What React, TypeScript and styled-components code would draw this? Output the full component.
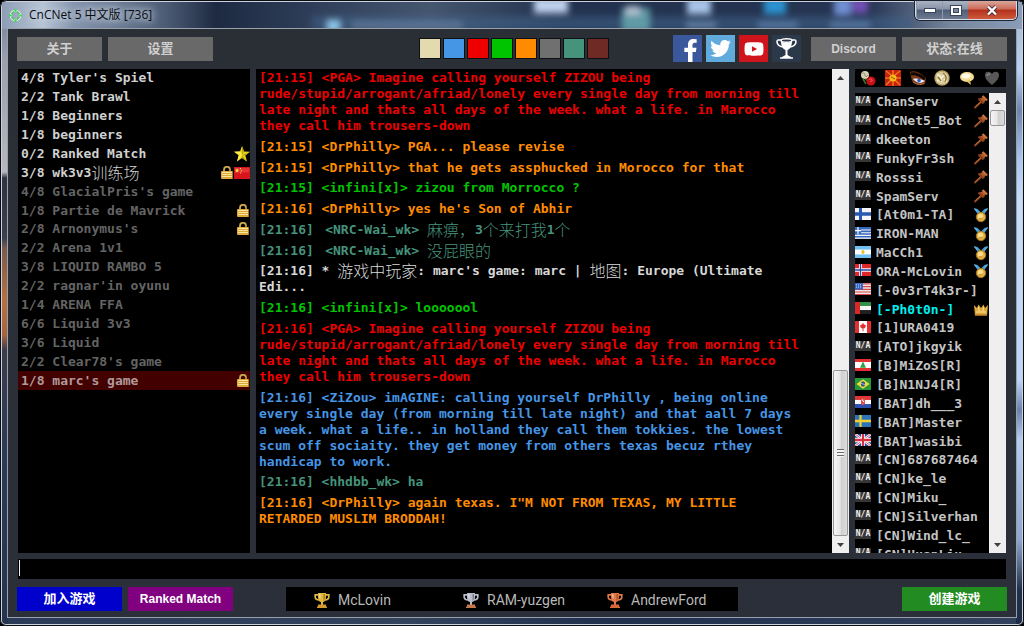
import React from 'react';
import styled, { createGlobalStyle } from 'styled-components';
import { FaFacebookF, FaTwitter, FaYoutube } from 'react-icons/fa';

const mono = '"DejaVu Sans Mono", "Noto Sans CJK SC", monospace';
const sans = '"Liberation Sans", "Noto Sans CJK SC", sans-serif';

const GlobalStyle = createGlobalStyle`
  *, *::before, *::after { box-sizing: border-box; }
  body { margin: 0; background: #000; font-family: ${sans}; }
  button, input { font-family: inherit; border: 0; padding: 0; margin: 0; border-radius: 0; }
  ul { list-style: none; margin: 0; padding: 0; }
  svg { display: block; }
`;

/* ---------- window frame ---------- */

const Window = styled.div`
  position: relative;
  display: flex;
  flex-direction: column;
  height: 100vh;
  min-height: 480px;
  padding: 0 7px 8px;
  border-radius: 7px 7px 6px 6px;
  overflow: hidden;
  box-shadow: inset 0 0 0 1px #0a0c12, inset 0 0 0 2px #c9d2dd;
  background:
    linear-gradient(#6d7a90 0, #9aa0ae 60px, #b7b7bd 172px, #2e3344 178px, #39404f 238px, #7a5a4e 248px, #b8703c 300px, #a8643c 335px, #3c3d4c 350px, #2c3a55 460px, #26344f 100%) left / 8px 100% no-repeat,
    linear-gradient(#9fb2cc 0, #b9d2f2 70px, #6f86ab 110px, #a9c6ef 160px, #c6dcfa 200px, #bcd6f8 380px, #6a83ab 410px, #b6cdee 440px, #8ea6cc 540px, #22304c 590px, #1e2c46 100%) right / 8px 100% no-repeat,
    linear-gradient(90deg, #2b3a57, #34435c 40%, #1f2f4c 60%, #33415c);
`;

const Backdrop = styled.svg`
  position: absolute;
  inset: 2px 2px auto 2px;
  width: calc(100% - 4px);
  height: 27px;
`;

const TitleBar = styled.header`
  position: relative;
  flex: none;
  display: flex;
  align-items: flex-start;
  justify-content: space-between;
  height: 28px;
`;

const Title = styled.h1`
  display: flex;
  align-items: center;
  gap: 7px;
  margin: 5px 0 0 2px;
  font: 400 12px/20px "Open Sans", "Noto Sans CJK SC", sans-serif;
  color: #0a0c12;
  text-shadow: 0 0 6px #c9d3e0, 0 0 8px #c9d3e0, 0 0 12px #b4c0d0;
`;

const Controls = styled.div`
  display: flex;
  margin-top: 1px;
  height: 19px;
  border: 1px solid #d5dbe4;
  border-top: 0;
  border-radius: 0 0 5px 5px;
  box-shadow: 0 0 0 1px #1c2536;
  overflow: hidden;
`;

const ControlButton = styled.button<{ $close?: boolean }>`
  display: grid;
  place-items: center;
  width: ${p => (p.$close ? 48 : 26)}px;
  border-left: ${p => (p.$close ? 0 : 1)}px solid #8f99ab;
  background: ${p =>
    p.$close
      ? 'linear-gradient(#d9a79c 0, #cc6a58 45%, #b3301c 50%, #cf5a3a 100%)'
      : 'linear-gradient(#a9b3c2 0, #8792a6 45%, #4f5d76 50%, #6c7990 100%)'};
`;

const Client = styled.div`
  position: relative;
  flex: 1;
  min-height: 0;
  display: flex;
  flex-direction: column;
  padding: 6px 9px;
  border: 1px solid #97a1ad;
  background: linear-gradient(#2a2e35, #2b2f39);
`;

/* ---------- toolbar ---------- */

const Bar = styled.div`
  flex: none;
  display: grid;
  grid-template-columns: 1fr auto 1fr;
  align-items: center;
`;

const Toolbar = styled(Bar)`
  height: 27px;
`;

const Group = styled.div<{ $end?: boolean }>`
  display: flex;
  align-items: center;
  gap: 6px;
  justify-content: ${p => (p.$end ? 'flex-end' : 'flex-start')};
`;

const Button = styled.button<{ $narrow?: boolean; $color?: string; $latin?: boolean }>`
  width: ${p => (p.$narrow ? 85 : 105)}px;
  height: 24px;
  background: ${p => p.$color || '#696969'};
  color: ${p => (p.$color ? '#fff' : '#d0d0d0')};
  font-size: ${p => (p.$latin ? 12 : 13)}px;
  font-weight: 700;
  line-height: 24px;
  white-space: nowrap;
`;

const Swatches = styled.div`
  display: flex;
  gap: 2px;
  margin-left: 3px;
`;

const Swatch = styled.button<{ $color: string }>`
  width: 22px;
  height: 21px;
  border: 1px solid #0d0f13;
  background: ${p => p.$color};
`;

const Socials = styled.nav`
  display: flex;
  gap: 4px;
  margin-right: 4px;
`;

const Social = styled.a<{ $color: string; $low?: boolean }>`
  display: flex;
  justify-content: center;
  align-items: ${p => (p.$low ? 'flex-end' : 'center')};
  width: 29px;
  height: 27px;
  padding-left: ${p => (p.$low ? 5 : 0)}px;
  overflow: hidden;
  color: #fff;
  background: ${p => p.$color};
`;

/* ---------- panels ---------- */

const Main = styled.main`
  flex: 1;
  min-height: 0;
  display: grid;
  grid-template-columns: 232px minmax(0, 1fr) 151px;
  grid-template-rows: minmax(0, 1fr);
  gap: 6px;
  margin: 7px 1px 6px;
  font: 700 13px/16px ${mono};
  color: #c8c8c8;
`;

const Panel = styled.section`
  display: flex;
  min-height: 0;
  overflow: hidden;
  background: #000;
`;

const Wide = styled.span`
  display: inline-block;
  height: 16px;
  vertical-align: top;
  font: 300 16px/14px "Noto Sans CJK SC", sans-serif;
`;

const Games = styled.ul`
  flex: 1;
  height: 321px;
  display: grid;
  grid-auto-rows: 1fr;
`;

const Game = styled.li<{ $state?: string }>`
  display: flex;
  align-items: center;
  justify-content: space-between;
  padding-left: 3px;
  white-space: pre;
  color: ${p => (p.$state === 'dim' ? '#646464' : p.$state === 'picked' ? '#b09a9a' : '#d0d0d0')};
  background: ${p => (p.$state === 'picked' ? '#420000' : 'transparent')};
`;

const Marks = styled.span`
  display: flex;
  align-items: center;
`;

const Messages = styled.div`
  flex: 1;
  min-width: 0;
  display: flex;
  flex-direction: column;
  justify-content: space-between;
  padding: 1px 3px 26px;
`;

const Message = styled.p<{ $color: string }>`
  margin: 0;
  white-space: pre;
  color: ${p => p.$color};
`;

const Side = styled.aside`
  display: flex;
  flex-direction: column;
  gap: 6px;
  min-height: 0;
`;

const Tools = styled.div`
  flex: none;
  display: flex;
  justify-content: space-between;
  align-items: center;
  height: 18px;
  padding: 0 6px 0 5px;
  background: #000;
`;

const ToolButton = styled.button`
  width: 16px;
  height: 16px;
  background: none;
`;

const UsersPanel = styled(Panel)`
  flex: 1;
`;

const Users = styled.ul`
  flex: 1;
  min-width: 0;
  height: calc(100% + 11px);
  display: grid;
  grid-auto-rows: 1fr;
`;

const User = styled.li<{ $me?: boolean }>`
  display: flex;
  align-items: center;
  white-space: pre;
  min-width: 0;
  padding-right: 1px;
  color: ${p => (p.$me ? '#00f0f0' : '#c4c4c4')};
`;

const Name = styled.span`
  flex: 1;
  margin-left: 5px;
  width: 0;
`;

const FlagBox = styled.span`
  flex: none;
  margin-bottom: 3px;
`;

const NoFlag = styled.span`
  display: block;
  width: 16px;
  height: 10px;
  background: #363636;
  color: #f0f0f0;
  font: 700 8px/10px ${mono};
  text-align: center;
`;

/* ---------- scrollbar ---------- */

const Track = styled.div`
  flex: none;
  display: flex;
  flex-direction: column;
  width: 17px;
  background: #efefef;
`;

const Arrow = styled.button`
  flex: none;
  display: grid;
  place-items: center;
  height: 17px;
  background: none;
`;

const Slot = styled.div<{ $end?: boolean }>`
  flex: 1;
  display: flex;
  flex-direction: column;
  justify-content: ${p => (p.$end ? 'flex-end' : 'flex-start')};
`;

const Thumb = styled.div<{ $size: string }>`
  display: grid;
  place-items: center;
  height: ${p => p.$size};
  margin: 0 1px;
  border: 1px solid #979797;
  border-radius: 2px;
  background: linear-gradient(90deg, #f5f5f5, #e6e6e6 48%, #cfcfcf 55%, #dcdcdc);
`;

const Grip = styled.span`
  width: 7px;
  height: 8px;
  background: repeating-linear-gradient(#6a6a6a 0 1px, #f4f4f4 1px 3px);
`;

/* ---------- entry line and bottom bar ---------- */

const Entry = styled.label`
  flex: none;
  display: flex;
  height: 20px;
  margin: 0 1px 8px;
  padding: 1px;
  background: #000;
`;

const Caret = styled.span`
  width: 1px;
  height: 16px;
  background: #f0f0f0;
`;

const EntryInput = styled.input`
  flex: 1;
  background: none;
  outline: none;
  color: #d0d0d0;
  font: 700 13px/16px ${mono};
  caret-color: transparent;
`;

const Ladder = styled.ol`
  display: grid;
  grid-template-columns: 149px 144px 1fr;
  align-items: center;
  width: 452px;
  height: 24px;
  margin: 0;
  padding: 2px 0 0 28px;
  list-style: none;
  background: #000;
`;

const Winner = styled.li`
  display: flex;
  align-items: center;
  gap: 8px;
  font: 400 14px/20px Roboto, sans-serif;
  color: #b8b8b8;
`;

/* ---------- drawings ---------- */

const Aero = () => (
  <Backdrop viewBox="0 0 1020 27" preserveAspectRatio="none" aria-hidden="true">
    <defs>
      <linearGradient id="glass" x1="0" x2="1" y1="0" y2="0">
        <stop offset="0" stopColor="#8c9db5" />
        <stop offset=".04" stopColor="#b9c5d6" />
        <stop offset=".07" stopColor="#8494ac" />
        <stop offset=".16" stopColor="#4d5c75" />
        <stop offset=".21" stopColor="#1d2a42" />
        <stop offset=".33" stopColor="#34445f" />
        <stop offset=".42" stopColor="#45566f" />
        <stop offset=".55" stopColor="#22324e" />
        <stop offset=".85" stopColor="#263552" />
        <stop offset=".93" stopColor="#76869c" />
        <stop offset="1" stopColor="#8a9cb8" />
      </linearGradient>
      <filter id="soft" x="-30%" y="-30%" width="160%" height="160%">
        <feGaussianBlur stdDeviation="3" />
      </filter>
    </defs>
    <rect width="1020" height="27" fill="url(#glass)" />
    <g filter="url(#soft)">
      <rect x="310" y="14" width="600" height="14" fill="#3f6289" opacity=".55" />
      <rect x="325" y="18" width="13" height="12" fill="#8cc4e8" />
      <rect x="350" y="19" width="110" height="8" fill="#6a83a5" opacity=".6" />
      <rect x="532" y="-4" width="34" height="15" fill="#bdd0ec" />
      <rect x="620" y="6" width="28" height="24" fill="#5f9aa6" />
      <rect x="624" y="4" width="14" height="9" fill="#b0bfce" />
      <rect x="685" y="-4" width="24" height="16" fill="#a8c4e8" />
      <rect x="762" y="-4" width="22" height="16" fill="#2a92d0" />
      <rect x="832" y="-4" width="17" height="17" fill="#6f8fd2" />
      <rect x="850" y="-4" width="16" height="15" fill="#7350b4" />
      <rect x="684" y="20" width="30" height="6" fill="#6583a8" />
      <rect x="756" y="20" width="40" height="6" fill="#587aa4" />
      <rect x="828" y="20" width="40" height="6" fill="#587aa4" />
    </g>
  </Backdrop>
);

const Crosshair = () => (
  <svg width="13" height="13" viewBox="0 0 14 14" aria-hidden="true">
    <circle cx="7" cy="7" r="5" fill="none" stroke="#f4f8f4" strokeWidth="2.400" />
    <path d="M2.500 5.500l3-3M8.500 2.500l3 3M11.500 8.500l-3 3M5.500 11.500l-3-3" stroke="#58b868" strokeWidth="1.600" />
    <path d="M7 0v3M7 11v3M0 7h3M11 7h3" stroke="#2fe04a" strokeWidth="2.400" />
  </svg>
);

const Lock = () => (
  <svg width="14" height="14" viewBox="0 0 14 14" aria-label="locked">
    <path d="M4 6V3.700a3 3 0 0 1 6 0V6" fill="none" stroke="#a8842c" strokeWidth="2" />
    <path d="M4 5V3.700a3 3 0 0 1 6 0" fill="none" stroke="#ecd080" strokeWidth=".7" />
    <rect x="1" y="5" width="12" height="8" rx="1" fill="#dca838" />
    <path d="M2 6.500h10M2 8.500h10M2 10.500h10" stroke="#f8e49c" strokeWidth="1" />
    <path d="M12.500 5.500v7" stroke="#a87820" />
  </svg>
);

const Star = () => (
  <svg width="16" height="16" viewBox="0 0 16 16" aria-label="ranked">
    <path d="M8 0l2 5.600 6 .2-4.700 3.700L13 15.500 8 12l-5 3.500 1.700-6L0 5.800l6-.2z" fill="#e8d81c" />
    <path d="M8 9l5 6.500L8 12zM8 9l8-3.200-4.700 3.700zM8 0l2 5.600L8 9z" fill="#b8a010" />
    <path d="M8 9L0 5.800l6-.2zM8 9l-5 6.500 1.700-6z" fill="#fff05c" />
  </svg>
);

const ChinaFlag = () => (
  <svg width="16" height="12" viewBox="0 0 16 11" preserveAspectRatio="none" aria-label="CN">
    <rect width="16" height="11" fill="#d8141c" />
    <rect x="1" y="1" width="14" height="4" fill="#ee4a4a" opacity=".6" />
    <path d="M3 1l.7 1.500H5.200L4 3.600l.4 1.600L3 4.200l-1.400 1L2 3.600.8 2.500h1.500z" fill="#ffe040" />
    <path d="M6 1h1v1H6zM7 3h1v1H7zM6 5h1v1H6z" fill="#ffe040" />
  </svg>
);

const Cup = ({ fill, dark, base }: { fill: string; dark: string; base: string }) => (
  <svg width="16" height="15" viewBox="0 0 16 15" aria-hidden="true">
    <path d="M4 1.800H1.200V4c0 1.800 1.300 2.800 4 3M12 1.800h2.800V4c0 1.800-1.300 2.800-4 3" fill="none" stroke={fill} strokeWidth="1.700" />
    <path d="M4 0h8v4c0 3-1.500 5-3 5v3H7V9C5.500 9 4 7 4 4z" fill={fill} />
    <path d="M9.500 1h1.500v3c0 2-.6 3.500-1.500 4z" fill={dark} />
    <path d="M5 1h1.500v5C5.500 5.500 5 4 5 3z" fill="#fff" opacity=".45" />
    <path d="M4 11.500h8v1.500l1 1v1H3v-1l1-1z" fill={base} />
  </svg>
);

const WhiteCup = () => (
  <svg width="21" height="21" viewBox="0 0 21 21" fill="none" stroke="#fff" aria-hidden="true">
    <path d="M6 2H2c-1 0-1 1-1 2 .3 3 2.500 4.500 6 5M15 2h4c1 0 1 1 1 2-.3 3-2.500 4.500-6 5" strokeWidth="1.600" />
    <ellipse cx="10.500" cy="2.500" rx="5.500" ry="1.700" strokeWidth="1.500" />
    <path d="M5 3c0 5 2 8 4.500 9v5L6 19v1h9v-1l-3.500-2v-5C14 11 16 8 16 3c-2 2-9 2-11 0z" fill="#fff" stroke="none" />
    <path d="M4 20h13" strokeWidth="1.500" />
  </svg>
);

const Hammer = () => (
  <svg width="14" height="15" viewBox="0 0 14 15" aria-label="admin">
    <path d="M1 12.500L7.500 6.500" stroke="#8f441c" strokeWidth="2" strokeLinecap="round" />
    <path d="M5.500 3.500l4-1.500 2 2.500-1.500 4z" fill="#b05828" />
    <path d="M4.500 3.500l5 5" stroke="#8a4018" strokeWidth="2.200" />
    <path d="M8.500 1l4.500 4.500" stroke="#c87038" strokeWidth="2.400" />
    <path d="M1.500 11.500L6.500 7" stroke="#d08450" strokeWidth=".7" />
  </svg>
);

const Medal = () => (
  <svg width="14" height="15" viewBox="0 0 14 15" aria-label="medal">
    <path d="M0 0l3.500 1L7 4.500 3.500 6zM14 0l-3.500 1L7 4.500 10.500 6z" fill="#3f9ed8" />
    <path d="M0 .5l3 3M14 .5l-3 3" stroke="#8ccaf0" />
    <circle cx="7" cy="9" r="4.700" fill="#e0b040" stroke="#a87420" />
    <circle cx="6.500" cy="8.500" r="2.800" fill="#f8dc8c" />
    <path d="M5 10c1 1.500 3 1 3.500-.5" stroke="#b88428" fill="none" />
  </svg>
);

const Crown = () => (
  <svg width="14" height="12" viewBox="0 0 14 12" aria-label="crown">
    <path d="M0 1l3 3 1.500-3.500L7 4l2.500-3.500L11 4l3-3-1 10.500H1z" fill="#e0a83c" />
    <path d="M2 8h10M4.500 3l.5 4M9.500 3L9 7" stroke="#fce49c" />
    <path d="M1 11h12" stroke="#b88024" />
  </svg>
);

const flagArt: Record<string, React.ReactNode> = {
  fi: <><rect width="16" height="10" fill="#f4f4f8" /><path d="M0 5h16M5.500 0v10" stroke="#2858b0" strokeWidth="3" /></>,
  gr: <><rect width="16" height="10" fill="#3468c0" /><path d="M6 2.500h10M6 4.800h10M0 7h16M0 9.300h16" stroke="#f4f4f8" strokeWidth="1" /><path d="M0 3h6M3 0v6" stroke="#fff" strokeWidth="1.200" /></>,
  ar: <><rect width="16" height="10" fill="#70c0f0" /><rect y="3" width="16" height="4" fill="#fff" /><circle cx="8" cy="5" r="1.600" fill="#f0c020" /></>,
  no: <><rect width="16" height="10" fill="#e02828" /><path d="M0 5h16M5.500 0v10" stroke="#fff" strokeWidth="3" /><path d="M0 5h16M5.500 0v10" stroke="#2848a0" strokeWidth="1.400" /></>,
  us: <><rect width="16" height="10" fill="#f0e4e4" /><path d="M0 .7h16M0 3h16M0 5.300h16M0 7.500h16M0 9.600h16" stroke="#d84848" /><rect width="8" height="5.500" fill="#3868c0" /><path d="M1 1.500h6M1 3.500h6" stroke="#a8c0f0" strokeDasharray="1 1" /></>,
  ae: <><rect width="16" height="10" fill="#f4f4f4" /><rect width="16" height="3.300" fill="#309048" /><rect y="6.700" width="16" height="3.300" fill="#202020" /><rect width="5" height="10" fill="#d82828" /></>,
  ca: <><rect width="16" height="10" fill="#fff" /><path d="M0 0h4v10H0zM12 0h4v10h-4z" fill="#e03030" /><path d="M8 1.500l1 1.500 2 .5-1 2.500H8.500V8.500h-1V6H6L5 3.500 7 3z" fill="#e03030" /></>,
  lb: <><rect width="16" height="10" fill="#fff" /><path d="M0 0h16v2.500H0zM0 7.500h16V10H0z" fill="#e03030" /><path d="M8 2l3 5.300H5z" fill="#30a048" /></>,
  br: <><rect width="16" height="10" fill="#28983c" /><path d="M8 1l6.500 4L8 9 1.500 5z" fill="#f4dc30" /><circle cx="8" cy="5" r="2.200" fill="#2850a0" /><path d="M6 4.500l4 1" stroke="#dce8f8" strokeWidth=".6" /></>,
  hr: <><rect width="16" height="10" fill="#fff" /><rect width="16" height="3.300" fill="#e03838" /><rect y="6.700" width="16" height="3.300" fill="#2c50b0" /><path d="M6 2h4v4L8 8 6 6z" fill="#e85050" /><path d="M7 3h1v1H7zM8 4h1v1H8z" fill="#fff" /></>,
  se: <><rect width="16" height="10" fill="#2c74b8" /><path d="M0 5h16M5.500 0v10" stroke="#f4d030" strokeWidth="2.200" /></>,
  gb: <><rect width="16" height="10" fill="#2c489c" /><path d="M0 0l16 10M16 0L0 10" stroke="#fff" strokeWidth="2.200" /><path d="M0 0l16 10M16 0L0 10" stroke="#d83040" strokeWidth=".8" /><path d="M8 0v10M0 5h16" stroke="#fff" strokeWidth="3.600" /><path d="M8 0v10M0 5h16" stroke="#d83040" strokeWidth="2" /></>,
};

const Flag = ({ code }: { code?: string }) => (
  <FlagBox>
    {code ? (
      <svg width="16" height="12" viewBox="0 0 16 10" preserveAspectRatio="none" aria-label={code}>{flagArt[code]}</svg>
    ) : (
      <NoFlag>N/A</NoFlag>
    )}
  </FlagBox>
);

const badges: Record<string, React.ReactNode> = { hammer: <Hammer />, medal: <Medal />, crown: <Crown /> };

const toolArt: [string, React.ReactNode][] = [
  ['rose', <>
    <circle cx="5" cy="5" r="4" fill="#d8d0b4" /><path d="M2 4c1-2 3-1 3 1s2 2 3 0" stroke="#8c8460" fill="none" />
    <path d="M3 9l3 5M5 9l3 2" stroke="#3c7828" strokeWidth="1.500" /><circle cx="11" cy="11" r="4.500" fill="#c81018" />
    <path d="M9 10c1-2 4-1 3 1-1 1-2 0-2 0" stroke="#ff6060" fill="none" />
  </>],
  ['burst', <>
    <rect width="16" height="16" fill="#cc2010" />
    <path d="M1 1l5 4M15 1l-5 4M1 15l5-5M15 15l-5-5M8 0v5M0 8h5M11 8h5M8 11v5" stroke="#e87818" strokeWidth="1.500" />
    <circle cx="8" cy="8" r="3.500" fill="#f8b818" /><path d="M6 7l4 2" stroke="#805010" />
  </>],
  ['eye', <>
    <path d="M0 2C5 0 11 3 16 8l-1 6C10 15 4 14 2 11z" fill="#7c3c1c" />
    <path d="M1 4c5-1 9 1 14 5" stroke="#140804" strokeWidth="3" fill="none" />
    <path d="M3 9c3-1 8 0 12 2-4 3-9 2-12-2z" fill="#e8ecf8" /><circle cx="9" cy="10.500" r="1.800" fill="#2c58b8" />
    <path d="M3 12c3 2.500 7 3 11 1.500" stroke="#c87c50" fill="none" />
  </>],
  ['crest', <>
    <circle cx="8" cy="8" r="7.700" fill="#b8a060" /><circle cx="8" cy="8" r="6.300" fill="#d8cc9c" />
    <path d="M3 4l4 3v5M8 7l4-3M3 11l4-2M10 9l3 3" stroke="#f4ecd0" strokeWidth="2" fill="none" />
    <path d="M9 3c3 2 4 5 2 9M4 7l3 4" stroke="#8c7838" strokeWidth="1.400" fill="none" />
  </>],
  ['chat', <>
    <ellipse cx="8" cy="7" rx="7" ry="5" fill="#f4dc98" /><ellipse cx="7" cy="6" rx="4.500" ry="2.500" fill="#fffae4" />
    <path d="M7 11l5 4-1-5z" fill="#e4bc60" />
  </>],
  ['heart', <>
    <path d="M8 15C3 11 1 8 1 5c0-4 5-4 7-1 2-3 7-3 7 1 0 3-2 6-7 10z" fill="#585858" />
    <path d="M3 6c0-2 2-2.500 3-1.500" stroke="#a0a0a0" fill="none" />
  </>],
];

/* ---------- data ---------- */

type GameRow = { name: React.ReactNode; state?: string; lock?: boolean; flag?: boolean; star?: boolean };

const games: GameRow[] = [
  { name: "4/8 Tyler's Spiel" },
  { name: '2/2 Tank Brawl' },
  { name: '1/8 Beginners' },
  { name: '1/8 beginners' },
  { name: '0/2 Ranked Match', star: true },
  { name: <>3/8 wk3v3<Wide>训练场</Wide></>, lock: true, flag: true },
  { name: "4/8 GlacialPris's game", state: 'dim' },
  { name: '1/8 Partie de Mavrick', state: 'dim', lock: true },
  { name: "2/8 Arnonymus's", state: 'dim', lock: true },
  { name: '2/2 Arena 1v1', state: 'dim' },
  { name: '3/8 LIQUID RAMBO 5', state: 'dim' },
  { name: "2/2 ragnar'in oyunu", state: 'dim' },
  { name: '1/4 ARENA FFA', state: 'dim' },
  { name: '6/6 Liquid 3v3', state: 'dim' },
  { name: '3/6 Liquid', state: 'dim' },
  { name: "2/2 Clear78's game", state: 'dim' },
  { name: "1/8 marc's game", state: 'picked', lock: true },
];

const red = '#ee0000';
const orange = '#ff8c00';
const green = '#00c400';
const teal = '#46937c';
const blue = '#4696e6';

const rant = `<PGA> Imagine calling yourself ZIZOU being
rude/stupid/arrogant/afriad/lonely every single day from morning till
late night and thats all days of the week. what a life. in Marocco
they call him trousers-down`;

const messages: [string, React.ReactNode][] = [
  [red, `[21:15] ${rant}`],
  [orange, '[21:15] <DrPhilly> PGA... please revise'],
  [orange, '[21:15] <DrPhilly> that he gets assphucked in Morocco for that'],
  [green, '[21:15] <infini[x]> zizou from Morrocco ?'],
  [orange, "[21:16] <DrPhilly> yes he's Son of Abhir"],
  [teal, <>[21:16] <Wide> </Wide>{'<NRC-Wai_wk> '}<Wide>麻痹，</Wide>3<Wide>个来打我</Wide>1<Wide>个</Wide></>],
  [teal, <>[21:16] <Wide> </Wide>{'<NRC-Wai_wk> '}<Wide>没屁眼的</Wide></>],
  ['#d8d8d8', <>[21:16] * <Wide>游戏中玩家</Wide>: marc's game: marc | <Wide>地图</Wide>: Europe (Ultimate{'\n'}Edi...</>],
  [green, '[21:16] <infini[x]> looooool'],
  [red, `[21:16] ${rant}`],
  [blue, `[21:16] <ZiZou> imAGINE: calling yourself DrPhilly , being online
every single day (from morning till late night) and that aall 7 days
a week. what a life.. in holland they call them tokkies. the lowest
scum off sociaity. they get money from others texas becuz rthey
handicap to work.`],
  [teal, '[21:16] <hhdbb_wk> ha'],
  [orange, `[21:16] <DrPhilly> again texas. I"M NOT FROM TEXAS, MY LITTLE
RETARDED MUSLIM BRODDAH!`],
];

const users: [string, string?, string?][] = [
  ['ChanServ', undefined, 'hammer'],
  ['CnCNet5_Bot', undefined, 'hammer'],
  ['dkeeton', undefined, 'hammer'],
  ['FunkyFr3sh', undefined, 'hammer'],
  ['Rosssi', undefined, 'hammer'],
  ['SpamServ', undefined, 'hammer'],
  ['[At0m1-TA]', 'fi', 'medal'],
  ['IRON-MAN', 'gr', 'medal'],
  ['MaCCh1', 'ar', 'medal'],
  ['ORA-McLovin', 'no', 'medal'],
  ['[-0v3rT4k3r-]', 'us'],
  ['[-Ph0t0n-]', 'ae', 'crown'],
  ['[1]URA0419', 'ca'],
  ['[ATO]jkgyik'],
  ['[B]MiZoS[R]', 'lb'],
  ['[B]N1NJ4[R]', 'br'],
  ['[BAT]dh___3', 'hr'],
  ['[BAT]Master', 'se'],
  ['[BAT]wasibi', 'gb'],
  ['[CN]687687464'],
  ['[CN]ke_le'],
  ['[CN]Miku_'],
  ['[CN]Silverhan'],
  ['[CN]Wind_lc_'],
  ['[CN]HuanLiu'],
];

const swatches = ['#e3dab0', '#4696e6', '#ee0000', '#00c400', '#ff8c00', '#707070', '#46937c', '#6f2a26'];

const ScrollBar = ({ size, end, grip }: { size: string; end?: boolean; grip?: boolean }) => (
  <Track>
    <Arrow aria-label="scroll up">
      <svg width="7" height="4" viewBox="0 0 7 4"><path d="M0 4l3.500-4L7 4z" fill="#404040" /></svg>
    </Arrow>
    <Slot $end={end}>
      <Thumb $size={size}>{grip && <Grip />}</Thumb>
    </Slot>
    <Arrow aria-label="scroll down">
      <svg width="7" height="4" viewBox="0 0 7 4"><path d="M0 0l3.500 4L7 0z" fill="#404040" /></svg>
    </Arrow>
  </Track>
);

export default function App() {
  return (
    <>
      <GlobalStyle />
      <Window>
        <Aero />
        <TitleBar>
          <Title><Crosshair />CnCNet 5 中文版 [736]</Title>
          <Controls>
            <ControlButton aria-label="minimize">
              <svg width="12" height="6" viewBox="0 0 12 6"><rect x=".5" y="1.500" width="11" height="4" fill="#fff" stroke="#3c465a" /></svg>
            </ControlButton>
            <ControlButton aria-label="maximize">
              <svg width="12" height="11" viewBox="0 0 12 11">
                <rect x=".5" y=".5" width="11" height="10" fill="#fff" stroke="#3c465a" />
                <rect x="3.500" y="3.500" width="5" height="4" fill="#7a879c" stroke="#3c465a" />
              </svg>
            </ControlButton>
            <ControlButton $close aria-label="close">
              <svg width="12" height="11" viewBox="0 0 12 11">
                <path d="M2 1.500l8 8M10 1.500l-8 8" stroke="#4c2c34" strokeWidth="4" />
                <path d="M2 1.500l8 8M10 1.500l-8 8" stroke="#fff" strokeWidth="2.400" />
              </svg>
            </ControlButton>
          </Controls>
        </TitleBar>
        <Client>
          <Toolbar>
            <Group>
              <Button $narrow>关于</Button>
              <Button>设置</Button>
            </Group>
            <Swatches>
              {swatches.map(c => <Swatch key={c} $color={c} aria-label={`text colour ${c}`} />)}
            </Swatches>
            <Group $end>
              <Socials>
                <Social href="#facebook" $color="#3c589c" $low aria-label="Facebook"><FaFacebookF size={23} /></Social>
                <Social href="#twitter" $color="#60aadc" aria-label="Twitter"><FaTwitter size={21} /></Social>
                <Social href="#youtube" $color="#d0141c" aria-label="YouTube"><FaYoutube size={20} /></Social>
                <Social href="#ladder" $color="#2c394b" aria-label="Ladder"><WhiteCup /></Social>
              </Socials>
              <Button $narrow $latin>Discord</Button>
              <Button>状态:在线</Button>
            </Group>
          </Toolbar>
          <Main>
            <Panel>
              <Games>
                {games.map((g, i) => (
                  <Game key={i} $state={g.state}>
                    <span>{g.name}</span>
                    <Marks>
                      {g.star && <Star />}
                      {g.lock && <Lock />}
                      {g.flag && <ChinaFlag />}
                    </Marks>
                  </Game>
                ))}
              </Games>
            </Panel>
            <Panel>
              <Messages>
                {messages.map(([color, text], i) => <Message key={i} $color={color}>{text}</Message>)}
              </Messages>
              <ScrollBar size="166px" end grip />
            </Panel>
            <Side>
              <Tools>
                {toolArt.map(([label, art]) => (
                  <ToolButton key={label} aria-label={label}>
                    <svg width="16" height="16" viewBox="0 0 16 16">{art}</svg>
                  </ToolButton>
                ))}
              </Tools>
              <UsersPanel>
                <Users>
                  {users.map(([name, flag, badge]) => (
                    <User key={name} $me={badge === 'crown'}>
                      <Flag code={flag} />
                      <Name>{name}</Name>
                      {badge && badges[badge]}
                    </User>
                  ))}
                </Users>
                <ScrollBar size="16px" />
              </UsersPanel>
            </Side>
          </Main>
          <Entry>
            <Caret />
            <EntryInput type="text" aria-label="message" />
          </Entry>
          <Bar>
            <Group>
              <Button $color="#0000cc">加入游戏</Button>
              <Button $color="#800080" $latin>Ranked Match</Button>
            </Group>
            <Ladder>
              <Winner><Cup fill="#e0b840" dark="#a87c1c" base="#d89830" />McLovin</Winner>
              <Winner><Cup fill="#b8bcc8" dark="#7c808c" base="#c87848" />RAM-yuzgen</Winner>
              <Winner><Cup fill="#e07848" dark="#a84c24" base="#d86838" />AndrewFord</Winner>
            </Ladder>
            <Group $end>
              <Button $color="#228b22">创建游戏</Button>
            </Group>
          </Bar>
        </Client>
      </Window>
    </>
  );
}
